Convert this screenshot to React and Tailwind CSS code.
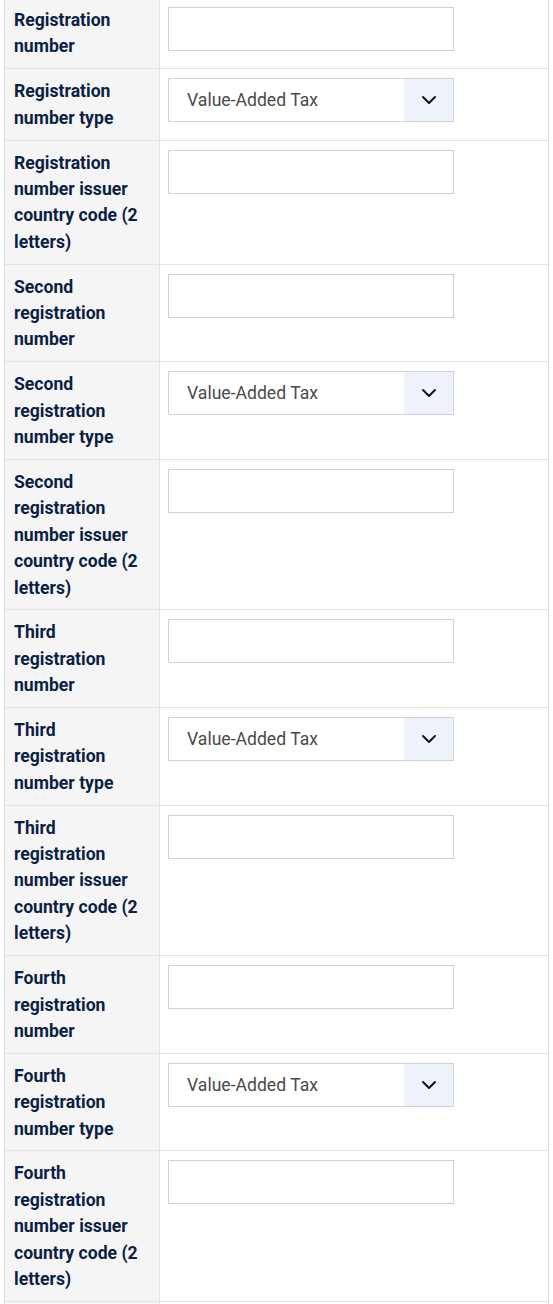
import React from 'react';

const rows = [
  { label: 'Registration number', type: 'text' },
  { label: 'Registration number type', type: 'select' },
  { label: 'Registration number issuer country code (2 letters)', type: 'text' },
  { label: 'Second registration number', type: 'text' },
  { label: 'Second registration number type', type: 'select' },
  { label: 'Second registration number issuer country code (2 letters)', type: 'text' },
  { label: 'Third registration number', type: 'text' },
  { label: 'Third registration number type', type: 'select' },
  { label: 'Third registration number issuer country code (2 letters)', type: 'text' },
  { label: 'Fourth registration number', type: 'text' },
  { label: 'Fourth registration number type', type: 'select' },
  { label: 'Fourth registration number issuer country code (2 letters)', type: 'text' },
  { label: '', type: 'none' },
];

function SelectBox() {
  return (
    <div className="flex h-[44px] w-[286px] border border-[#ccd1d9] bg-white">
      <div className="flex flex-1 items-center pl-[18px] text-[17.6px] text-[#4a4a4a]">Value-Added Tax</div>
      <div className="flex w-[49px] items-center justify-center bg-[#eef3fb]">
        <svg width="16" height="10" viewBox="0 0 16 10" fill="none">
          <path d="M2 2l6 6 6-6" stroke="#111" strokeWidth="2" strokeLinecap="round" strokeLinejoin="round" />
        </svg>
      </div>
    </div>
  );
}

export default function App() {
  return (
    <div className="h-[1304px] bg-white overflow-hidden" style={{ fontFamily: 'Roboto, "Liberation Sans", sans-serif' }}>
      <div className="ml-[4px] mt-[-2px] w-[545px] border-x border-[#dcdcdc]">
        {rows.map((row, i) => (
          <div key={i} className="flex border-b border-[#e3e3e3]">
            {/* label cell */}
            <div className="w-[154px] shrink-0 bg-[#f5f5f5] pl-[9px] pr-[14px] pt-[9px] pb-[8.45px] text-[17.6px] font-bold leading-[26.4px] text-[#0b1f44]">
              {row.label}
            </div>
            {/* field cell */}
            <div className="flex-1 border-l border-[#e3e3e3] pl-[8px] pt-[9px] pb-[8.45px]">
              {row.type === 'text' && (
                <input type="text" className="block h-[44px] w-[286px] border border-[#ccd1d9] bg-white outline-none" />
              )}
              {row.type === 'select' && <SelectBox />}
              {row.type === 'none' && <div className="h-[44px]" />}
            </div>
          </div>
        ))}
      </div>
    </div>
  );
}
